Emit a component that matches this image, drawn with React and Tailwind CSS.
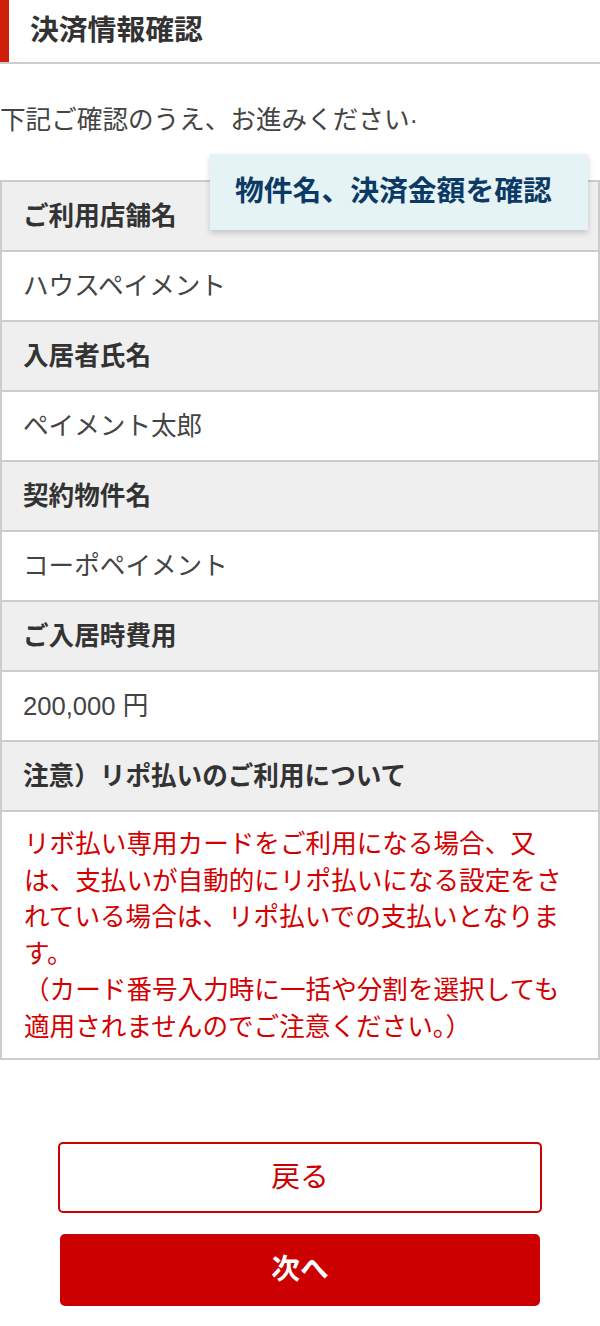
import React from "react";

const rows = [
	{ label: "ご利用店舗名", value: "ハウスペイメント" },
	{ label: "入居者氏名", value: "ペイメント太郎" },
	{ label: "契約物件名", value: "コーポペイメント" },
	{ label: "ご入居時費用", value: "200,000 円" },
];

const font = { fontFamily: '"Liberation Sans", "Noto Sans CJK JP", sans-serif' };

export default function App() {
	return (
		<div className="min-h-[1326px] bg-white text-[#444]" style={font}>
			{/* 見出し */}
			<div className="flex h-[64px] border-b-2 border-[#cccccc]">
				<div className="w-[9px] bg-[#d01e0b]"></div>
				<h1 className="flex items-center pl-[21px] text-[28.8px] font-bold text-[#333]">
					決済情報確認
				</h1>
			</div>

			<p className="mt-[38px] h-[36px] text-[25.6px] leading-[36px] text-[#444]">
				下記ご確認のうえ、お進みください·
			</p>

			{/* 確認テーブル */}
			<div className="relative mt-[42px] border-2 border-[#cccccc]">
				{rows.map((r, i) => (
					<React.Fragment key={i}>
						<div
							className={
								"flex items-center bg-[#efefef] px-[21px] text-[25.6px] font-bold text-[#333] " +
								(i > 0 ? "h-[70px] border-t-2 border-[#cccccc]" : "h-[68px]")
							}>
							{r.label}
						</div>
						<div className="flex h-[70px] items-center border-t-2 border-[#cccccc] px-[21px] text-[25.6px] text-[#444]">
							{r.value}
						</div>
					</React.Fragment>
				))}
				<div className="flex h-[70px] items-center border-t-2 border-[#cccccc] bg-[#efefef] px-[21px] text-[25.6px] font-bold text-[#333]">
					注意）リポ払いのご利用について
				</div>
				<div className="border-t-2 border-[#cccccc] pt-[14px] pb-[13px] pl-[22px] pr-[22px] text-[25.6px] leading-[36.5px] text-[#d40000]">
					リボ払い専用カードをご利用になる場合、又は、支払いが自動的にリポ払いになる設定をされている場合は、リポ払いでの支払いとなります。
					<br />
					（カード番号入力時に一括や分割を選択しても適用されませんのでご注意ください。）
				</div>

				{/* 吹き出し */}
				<div className="absolute left-[208px] top-[-28px] flex h-[76px] w-[378px] items-center bg-[#e6f3f5] pl-[25px] text-[28.8px] font-bold text-[#0b3a66] shadow-[0_3px_6px_rgba(0,0,0,0.18)]">
					物件名、決済金額を確認
				</div>
			</div>

			{/* ボタン */}
			<div className="mt-[82px] flex flex-col items-center gap-[21px]">
				<button className="flex h-[71px] w-[484px] items-center justify-center rounded-[5px] border-2 border-[#cc0000] bg-white text-[28.8px] text-[#cc0000]">
					戻る
				</button>
				<button className="flex h-[72px] w-[480px] items-center justify-center rounded-[5px] bg-[#cc0000] text-[28.8px] font-bold text-white">
					次へ
				</button>
			</div>
		</div>
	);
}
